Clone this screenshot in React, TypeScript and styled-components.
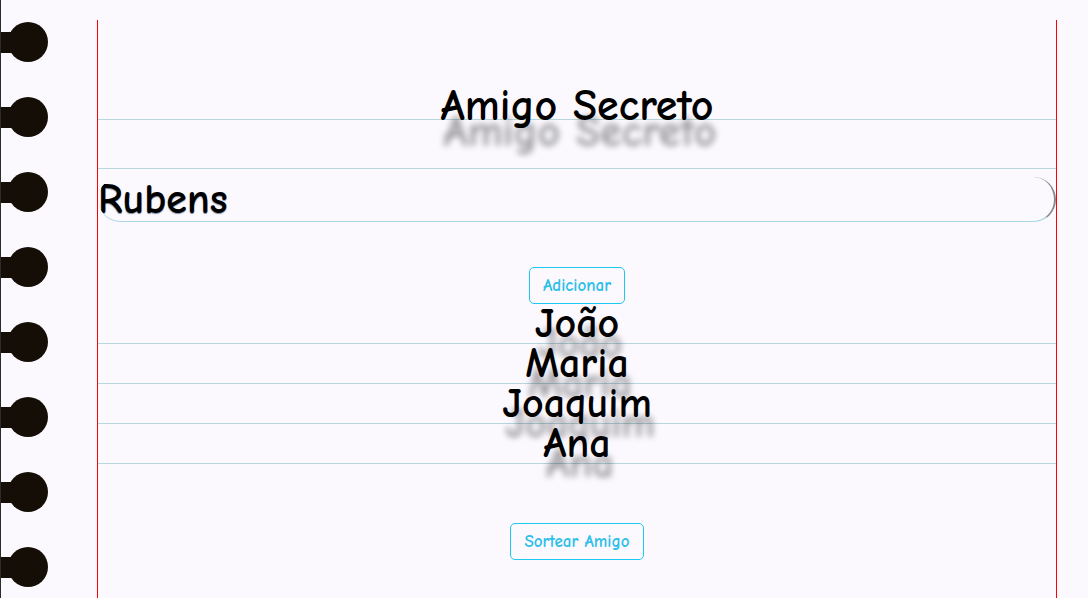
import React, { useState } from 'react';
import styled, { createGlobalStyle } from 'styled-components';

const GlobalStyle = createGlobalStyle`
    html, body {
        margin: 0;
        padding: 0;
        background: #fbf9fe;
    }
    body {
        font-family: "Comic Sans MS", "Comic Neue", "DejaVu Sans", sans-serif;
    }
`;

const Page = styled.div`
    display: flex;
    height: 598px;
    overflow: hidden;
    border-left: 1px solid #2b2b2b;
    box-sizing: border-box;
`;

const Spiral = styled.div`
    width: 96px;
    flex-shrink: 0;
    display: flex;
    flex-direction: column;
    gap: 35px;
    padding-top: 22px;
`;

const Ring = styled.div`
    position: relative;
    width: 40px;
    height: 40px;
    margin-left: 7px;
    border-radius: 50%;
    background: #140e07;

    &::before {
        content: '';
        position: absolute;
        left: -8px;
        top: 10px;
        width: 20px;
        height: 21px;
        background: #140e07;
    }
`;

const Sheet = styled.main`
    width: 960px;
    flex-shrink: 0;
    margin-top: 20px;
    border-left: 1px solid #f00;
    border-right: 1px solid #f00;
    box-sizing: border-box;
    display: flex;
    flex-direction: column;
    align-items: center;
`;

const Title = styled.h1`
    width: 100%;
    height: 100px;
    margin: 0;
    padding-top: 66px;
    box-sizing: border-box;
    border-bottom: 1px solid #b7d6de;
    text-align: center;
    font-size: 44px;
    font-weight: bold;
    line-height: 40px;
    color: #000;
    text-shadow: 3px 26px 6px rgba(0, 0, 0, 0.4);
`;

const Rule = styled.div`
    width: 100%;
    height: 48px;
    border-bottom: 1px solid #b7d6de;
`;

const NameInput = styled.input`
    width: 100%;
    height: 45px;
    margin-top: 8px;
    padding: 0;
    box-sizing: border-box;
    border: none;
    border-bottom: 1px solid #a9d7e0;
    border-right: 2px solid #8a8a8a;
    border-radius: 24px;
    background: transparent;
    font-family: inherit;
    font-size: 42px;
    font-weight: bold;
    color: #000;
    text-shadow: 0 1px 1px rgba(0, 30, 80, 0.5);
    outline: none;
`;

const Button = styled.button<{ $top: number }>`
    margin-top: ${(p) => p.$top}px;
    height: 37px;
    padding: 0 13px;
    border: 1px solid #1cc8ef;
    border-radius: 5px;
    background: transparent;
    font-family: inherit;
    font-size: 17px;
    font-weight: bold;
    color: #2dbfe8;
    cursor: pointer;
`;

const List = styled.ul`
    list-style: none;
    width: 100%;
    margin: 0;
    padding: 0;
`;

const Friend = styled.li`
    height: 40px;
    border-bottom: 1px solid #b7d6de;
    box-sizing: border-box;
    text-align: center;
    font-size: 42px;
    font-weight: bold;
    line-height: 40px;
    color: #000;
    text-shadow: 3px 20px 6px rgba(0, 0, 0, 0.4);
`;

const App = () => {
    const [name, setName] = useState('Rubens');
    const friends = ['João', 'Maria', 'Joaquim', 'Ana'];

    return (
        <>
            <GlobalStyle />
            <Page>
                <Spiral>
                    {Array.from({ length: 8 }).map((_, i) => (
                        <Ring key={i} />
                    ))}
                </Spiral>
                <Sheet>
                    <Title>Amigo Secreto</Title>
                    <Rule />
                    <NameInput value={name} onChange={(e) => setName(e.target.value)} />
                    <Button $top={45}>Adicionar</Button>
                    <List>
                        {friends.map((f) => (
                            <Friend key={f}>{f}</Friend>
                        ))}
                    </List>
                    <Button $top={59}>Sortear Amigo</Button>
                </Sheet>
            </Page>
        </>
    );
};

export default App;
